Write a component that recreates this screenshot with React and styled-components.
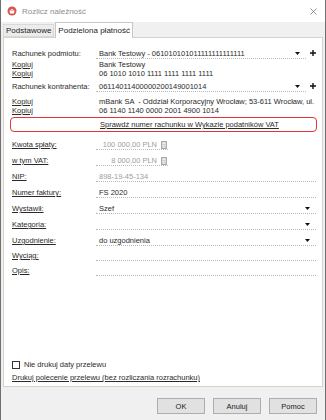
import styled, { createGlobalStyle } from 'styled-components'

const Global = createGlobalStyle`
  html, body { margin: 0; padding: 0; background: #fff; }
  body { font-family: "Liberation Sans", Arial, sans-serif; }
  * { box-sizing: border-box; }
`

const Window = styled.div`
  width: 326px;
  height: 420px;
  display: flex;
  flex-direction: column;
  background: #f0f0f0;
  border-left: 1px solid #6f6f6f;
  border-right: 1px solid #6f6f6f;
  font-size: 7.5px;
  color: #2a2a2a;
`

const TitleBar = styled.div`
  height: 22px;
  flex: none;
  background: #fff;
  display: flex;
  align-items: center;
  padding: 0 8px 0 6px;
`

const Title = styled.span`
  margin-left: 5px;
  font-size: 8px;
  color: #8c8c8c;
`

const Close = styled.svg`
  margin-left: auto;
`

const TabStrip = styled.div`
  height: 15px;
  flex: none;
  display: flex;
  align-items: flex-end;
  padding-left: 2px;
  position: relative;
  z-index: 1;
`

const Tab = styled.div`
  height: ${p => (p.$active ? 16 : 13)}px;
  margin-bottom: ${p => (p.$active ? -1 : 0)}px;
  margin-right: 1px;
  padding: 0 2px;
  display: flex;
  align-items: center;
  font-size: 8px;
  color: #1e1e1e;
  background: ${p => (p.$active ? '#fff' : '#ececec')};
  border: 1px solid ${p => (p.$active ? '#c8c8c8' : '#d9d9d9')};
  border-bottom: ${p => (p.$active ? 'none' : '1px solid #d9d9d9')};
`

const Panel = styled.div`
  flex: 1;
  margin: 0 2px 0 2px;
  background: #fff;
  border: 1px solid #d6d3c6;
  padding: 5px 6px 4px 8px;
  display: flex;
  flex-direction: column;
`

const Row = styled.div`
  display: flex;
  align-items: flex-end;
  flex: none;
  height: ${p => p.$h || 16}px;
`

const Label = styled.span`
  width: 84px;
  flex: none;
  line-height: 9px;
  padding-bottom: 1px;
  white-space: nowrap;
  text-decoration: ${p => (p.$u ? 'underline' : 'none')};
`

const Field = styled.div`
  flex: ${p => (p.$w ? 'none' : 1)};
  width: ${p => (p.$w ? `${p.$w}px` : 'auto')};
  height: 10px;
  line-height: 9px;
  display: flex;
  align-items: center;
  gap: 4px;
  justify-content: ${p => (p.$right ? 'flex-end' : 'flex-start')};
  padding: 0 ${p => p.$pr ?? 2}px 0 3px;
  border-bottom: 1px dotted #b9b9b9;
  color: ${p => (p.$off ? '#9d9d9d' : '#2a2a2a')};
  white-space: nowrap;
`

const Value = styled.span`
  flex: ${p => (p.$grow ? 1 : 'none')};
`

const Side = styled.svg`
  margin-left: 4px;
  margin-bottom: 3px;
  flex: none;
`

const CopyBlock = styled.div`
  flex: none;
  margin-top: ${p => p.$mt || 0}px;
`

const CopyLine = styled.div`
  display: flex;
  height: 9px;
  line-height: 9px;
`

const CopyLink = styled.a`
  width: 84px;
  flex: none;
  color: #2a2a2a;
  text-decoration: underline;
`

const CopyText = styled.span`
  padding-left: 3px;
  white-space: pre;
`

const VatCheck = styled.div`
  flex: none;
  height: 15px;
  margin: 2px -1px 1px -2px;
  border: 1px solid #e2343b;
  border-radius: 4px;
  display: flex;
  align-items: center;
  padding-left: 89px;
`

const PlainLink = styled.a`
  color: #2a2a2a;
  text-decoration: underline;
  white-space: nowrap;
`

const Bottom = styled.div`
  margin-top: auto;
  display: flex;
  flex-direction: column;
  gap: 4px;
`

const CheckRow = styled.label`
  display: flex;
  align-items: center;
  height: 9px;
  line-height: 9px;
`

const Box = styled.span`
  width: 8px;
  height: 8px;
  border: 1px solid #333;
  background: #fff;
  margin-right: 4px;
`

const Footer = styled.div`
  height: 33px;
  flex: none;
  display: flex;
  justify-content: flex-end;
  align-items: flex-start;
  gap: 8px;
  padding: 11px 8px 0 0;
`

const Button = styled.button`
  width: 48px;
  height: 16px;
  padding: 0;
  font-family: inherit;
  font-size: 7.5px;
  color: #1a1a1a;
  background: #e1e1e1;
  border: 1px solid #adadad;
`

const Arrow = () => (
  <svg width="5" height="3" viewBox="0 0 5 3">
    <path d="M0 0H5L2.5 3Z" fill="#111" />
  </svg>
)

const Plus = () => (
  <Side width="6" height="6" viewBox="0 0 6 6">
    <path d="M3 0V6M0 3H6" stroke="#111" strokeWidth="1.4" />
  </Side>
)

const Calc = () => (
  <svg width="6" height="8" viewBox="0 0 6 8">
    <rect x="0.5" y="0.5" width="5" height="7" fill="#d2d2d2" stroke="#a9a9a9" />
    <rect x="1.5" y="1.5" width="3" height="1.5" fill="#efefef" />
    <path d="M1.5 4.5H4.5M1.5 6H4.5" stroke="#eaeaea" strokeWidth="0.8" />
  </svg>
)

const Copy = ({ lines, mt }) => (
  <CopyBlock $mt={mt}>
    {lines.map(t => (
      <CopyLine key={t}>
        <CopyLink>Kopiuj</CopyLink>
        <CopyText>{t}</CopyText>
      </CopyLine>
    ))}
  </CopyBlock>
)

const fields = [
  { label: 'NIP:', value: '898-19-45-134', off: true },
  { label: 'Numer faktury:', value: 'FS 2020' },
  { label: 'Wystawił:', value: 'Szef', drop: true },
  { label: 'Kategoria:', value: '', drop: true },
  { label: 'Uzgodnienie:', value: 'do uzgodnienia', drop: true },
  { label: 'Wyciąg:', value: '', h: 15 },
  { label: 'Opis:', value: '', h: 15 },
]

export default function App() {
  return (
    <Window>
      <Global />
      <TitleBar>
        <svg width="10" height="10" viewBox="0 0 10 10">
          <circle cx="5" cy="5" r="4.5" fill="#d9534f" />
          <path d="M2.5 4.5H7.5L7 7.5H3Z" fill="#fff" />
          <path d="M3.5 4.3Q5 1.8 6.5 4.3" stroke="#fff" strokeWidth="0.8" fill="none" />
        </svg>
        <Title>Rozlicz należność</Title>
        <Close width="7" height="7" viewBox="0 0 7 7">
          <path d="M0.5 0.5L6.5 6.5M6.5 0.5L0.5 6.5" stroke="#7a7a7a" strokeWidth="0.8" />
        </Close>
      </TitleBar>

      <TabStrip>
        <Tab>Podstawowe</Tab>
        <Tab $active>Podzielona płatność</Tab>
      </TabStrip>

      <Panel>
        <Row>
          <Label>Rachunek podmiotu:</Label>
          <Field $pr={6}>
            <Value $grow>Bank Testowy - 061010101011111111111111</Value>
            <Arrow />
          </Field>
          <Plus />
        </Row>
        <Copy mt={1} lines={['Bank Testowy', '06 1010 1010 1111 1111 1111 1111']} />

        <Row $h={14}>
          <Label>Rachunek kontrahenta:</Label>
          <Field $pr={6}>
            <Value $grow>06114011400000200149001014</Value>
            <Arrow />
          </Field>
          <Plus />
        </Row>
        <Copy
          mt={5}
          lines={[
            'mBank SA  - Oddział Korporacyjny Wrocław; 53-611 Wrocław, ul.',
            '06 1140 1140 0000 2001 4900 1014',
          ]}
        />

        <VatCheck>
          <PlainLink>Sprawdź numer rachunku w Wykazie podatników VAT</PlainLink>
        </VatCheck>

        <Row $h={17}>
          <Label $u>Kwota spłaty:</Label>
          <Field $w={72} $right $off $pr={1}>
            <Value>100 000,00 PLN</Value>
            <Calc />
          </Field>
        </Row>
        <Row>
          <Label $u>w tym VAT:</Label>
          <Field $w={72} $right $off $pr={1}>
            <Value>8 000,00 PLN</Value>
            <Calc />
          </Field>
        </Row>

        {fields.map(f => (
          <Row key={f.label} $h={f.h}>
            <Label $u>{f.label}</Label>
            <Field $off={f.off} $pr={6}>
              <Value $grow>{f.value}</Value>
              {f.drop && <Arrow />}
            </Field>
          </Row>
        ))}

        <Bottom>
          <CheckRow>
            <Box />
            Nie drukuj daty przelewu
          </CheckRow>
          <CheckRow>
            <PlainLink>Drukuj polecenie przelewu (bez rozliczania rozrachunku)</PlainLink>
          </CheckRow>
        </Bottom>
      </Panel>

      <Footer>
        <Button>OK</Button>
        <Button>Anuluj</Button>
        <Button>Pomoc</Button>
      </Footer>
    </Window>
  )
}
